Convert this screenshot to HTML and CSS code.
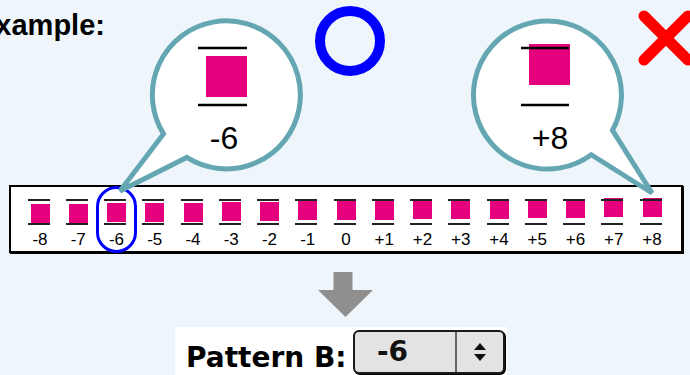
FILE: index.html
```html
<!DOCTYPE html>
<html lang="en">
<head>
    <meta charset="UTF-8">
    <meta name="viewport" content="width=device-width, initial-scale=1.0">
    <title>Pattern example</title>
    <link rel="stylesheet" href="styles.css">
</head>
<body>
<div class="page">

    <div class="intro">
        <h2 class="title">Example:</h2>
    </div>

    <!-- callouts and marks drawn over the strip -->
    <svg class="callouts" width="690" height="260" viewBox="0 0 690 260">
        <circle cx="350" cy="41" r="30" fill="none" stroke="#0000ff" stroke-width="10"/>
        <g stroke="#ff0000" stroke-width="11" stroke-linecap="round">
            <line x1="644" y1="16" x2="688" y2="60"/>
            <line x1="644" y1="60" x2="688" y2="16"/>
        </g>

        <rect x="97.5" y="187.5" width="38" height="64" rx="19" fill="none" stroke="#0000ff" stroke-width="3"/>

        <g fill="#fff" stroke="#64a7b3" stroke-width="5">
            <path d="M186.8,157.4 A74,74 0 1 0 163.5,133.9 L120,191 Z"/>
            <path d="M612.5,130.3 A74,74 0 1 0 591.2,154.7 L652,193 Z"/>
        </g>

        <rect x="206" y="56" width="41" height="41" fill="#e5007d"/>
        <rect x="529" y="44" width="41" height="41" fill="#e5007d"/>
        <g stroke="#000" stroke-width="2.5">
            <line x1="198" y1="48" x2="247" y2="48"/>
            <line x1="198" y1="105" x2="247" y2="105"/>
            <line x1="521" y1="48" x2="569" y2="48"/>
            <line x1="521" y1="105" x2="569" y2="105"/>
        </g>
        <text class="callout-num" x="224" y="149" text-anchor="middle">-6</text>
        <text class="callout-num" x="550" y="149" text-anchor="middle">+8</text>
    </svg>

    <div class="strip" id="strip"></div>

    <div class="arrow-row">
        <svg width="56" height="45" viewBox="0 0 56 45">
            <rect x="16.5" y="0" width="19" height="18" fill="#8f8f8f"/>
            <polygon points="1,18 56,18 28.5,45" fill="#8f8f8f"/>
        </svg>
    </div>

    <div class="pattern-row">
        <span class="pattern-label">Pattern B:</span>
        <div class="select">
            <span class="select-value">-6</span>
            <span class="select-btn">
                <svg width="14" height="22" viewBox="0 0 14 22">
                    <polygon points="1,9 13,9 7,2" fill="#111"/>
                    <polygon points="1,13 13,13 7,20" fill="#111"/>
                </svg>
            </span>
        </div>
    </div>

</div>

<script>
    const strip = document.getElementById("strip");

    for (let n = -8; n <= 8; n++) {
        let item = document.createElement("div");
        item.classList.add("item");

        let cell = document.createElement("div");
        cell.classList.add("cell");

        let top = document.createElement("div");
        top.classList.add("line");
        let zone = document.createElement("div");
        zone.classList.add("zone");
        let sq = document.createElement("div");
        sq.classList.add("sq");
        // square rises a little with each step
        sq.style.marginTop = (3 - 0.375 * (n + 8)) + "px";
        zone.appendChild(sq);
        let bottom = document.createElement("div");
        bottom.classList.add("line");

        cell.appendChild(top);
        cell.appendChild(zone);
        cell.appendChild(bottom);

        let label = document.createElement("div");
        label.classList.add("label");
        label.textContent = n > 0 ? "+" + n : String(n);

        item.appendChild(cell);
        item.appendChild(label);
        strip.appendChild(item);
    }
</script>
</body>
</html>
```

FILE: styles.css
```css
body {
    margin: 0;
    background-color: #eef6fc;
    font-family: "Liberation Sans", Arial, sans-serif;
    color: #000;
    overflow: hidden;
}

.page {
    position: relative;
    width: 690px;
    height: 375px;
    overflow: hidden;
}

.intro {
    height: 185px;
}

.title {
    margin: 0 0 0 -24px;
    padding-top: 11px;
    font-size: 29px;
    line-height: 29px;
    font-weight: bold;
}

.callouts {
    position: absolute;
    left: 0;
    top: 0;
    z-index: 2;
    pointer-events: none;
}

.callout-num {
    font-family: "Liberation Sans", Arial, sans-serif;
    font-size: 32px;
    fill: #000;
}

.strip {
    margin-left: 9px;
    width: 674px;
    height: 68px;
    box-sizing: border-box;
    border: 2px solid #000;
    box-shadow: 1px 1px 0 #000;
    background-color: #fff;
    display: flex;
    justify-content: center;
    padding-top: 12px;
}

.item {
    width: 38.25px;
    flex: none;
    display: flex;
    flex-direction: column;
    align-items: center;
}

.cell {
    width: 22px;
    margin-left: -3px;
}

.line {
    height: 2px;
    background-color: #222;
    position: relative;
    z-index: 1;
}

.zone {
    height: 22px;
    display: flow-root;
}

.sq {
    width: 19px;
    height: 19px;
    margin-left: 3px;
    background-color: #e5007d;
}

.label {
    margin-top: 6px;
    font-size: 17px;
    line-height: 18px;
}

.arrow-row {
    display: flex;
    justify-content: center;
    margin-top: 19px;
}

.arrow-row svg {
    display: block;
}

.pattern-row {
    display: flex;
    align-items: flex-start;
    margin-top: 10px;
    margin-left: 175px;
    width: 332px;
    height: 48px;
    box-sizing: border-box;
    padding: 3px 2px 0 11px;
    background-color: #fff;
}

.pattern-label {
    font-family: "DejaVu Sans", Verdana, sans-serif;
    font-weight: bold;
    font-size: 28px;
    line-height: 32px;
    padding-top: 12px;
}

.select {
    margin-left: auto;
    width: 152px;
    height: 44px;
    box-sizing: border-box;
    border: 2px solid #1a1a1a;
    border-radius: 6px;
    box-shadow: 1px 1px 0 #000;
    background-color: #e3e3e3;
    display: flex;
}

.select-value {
    flex: 1;
    padding-left: 22px;
    font-family: "DejaVu Sans", Verdana, sans-serif;
    font-weight: bold;
    font-size: 28px;
    line-height: 40px;
    color: #111;
}

.select-btn {
    width: 48px;
    box-sizing: border-box;
    border-left: 2px solid #666;
    display: flex;
    align-items: center;
    justify-content: center;
}
```
